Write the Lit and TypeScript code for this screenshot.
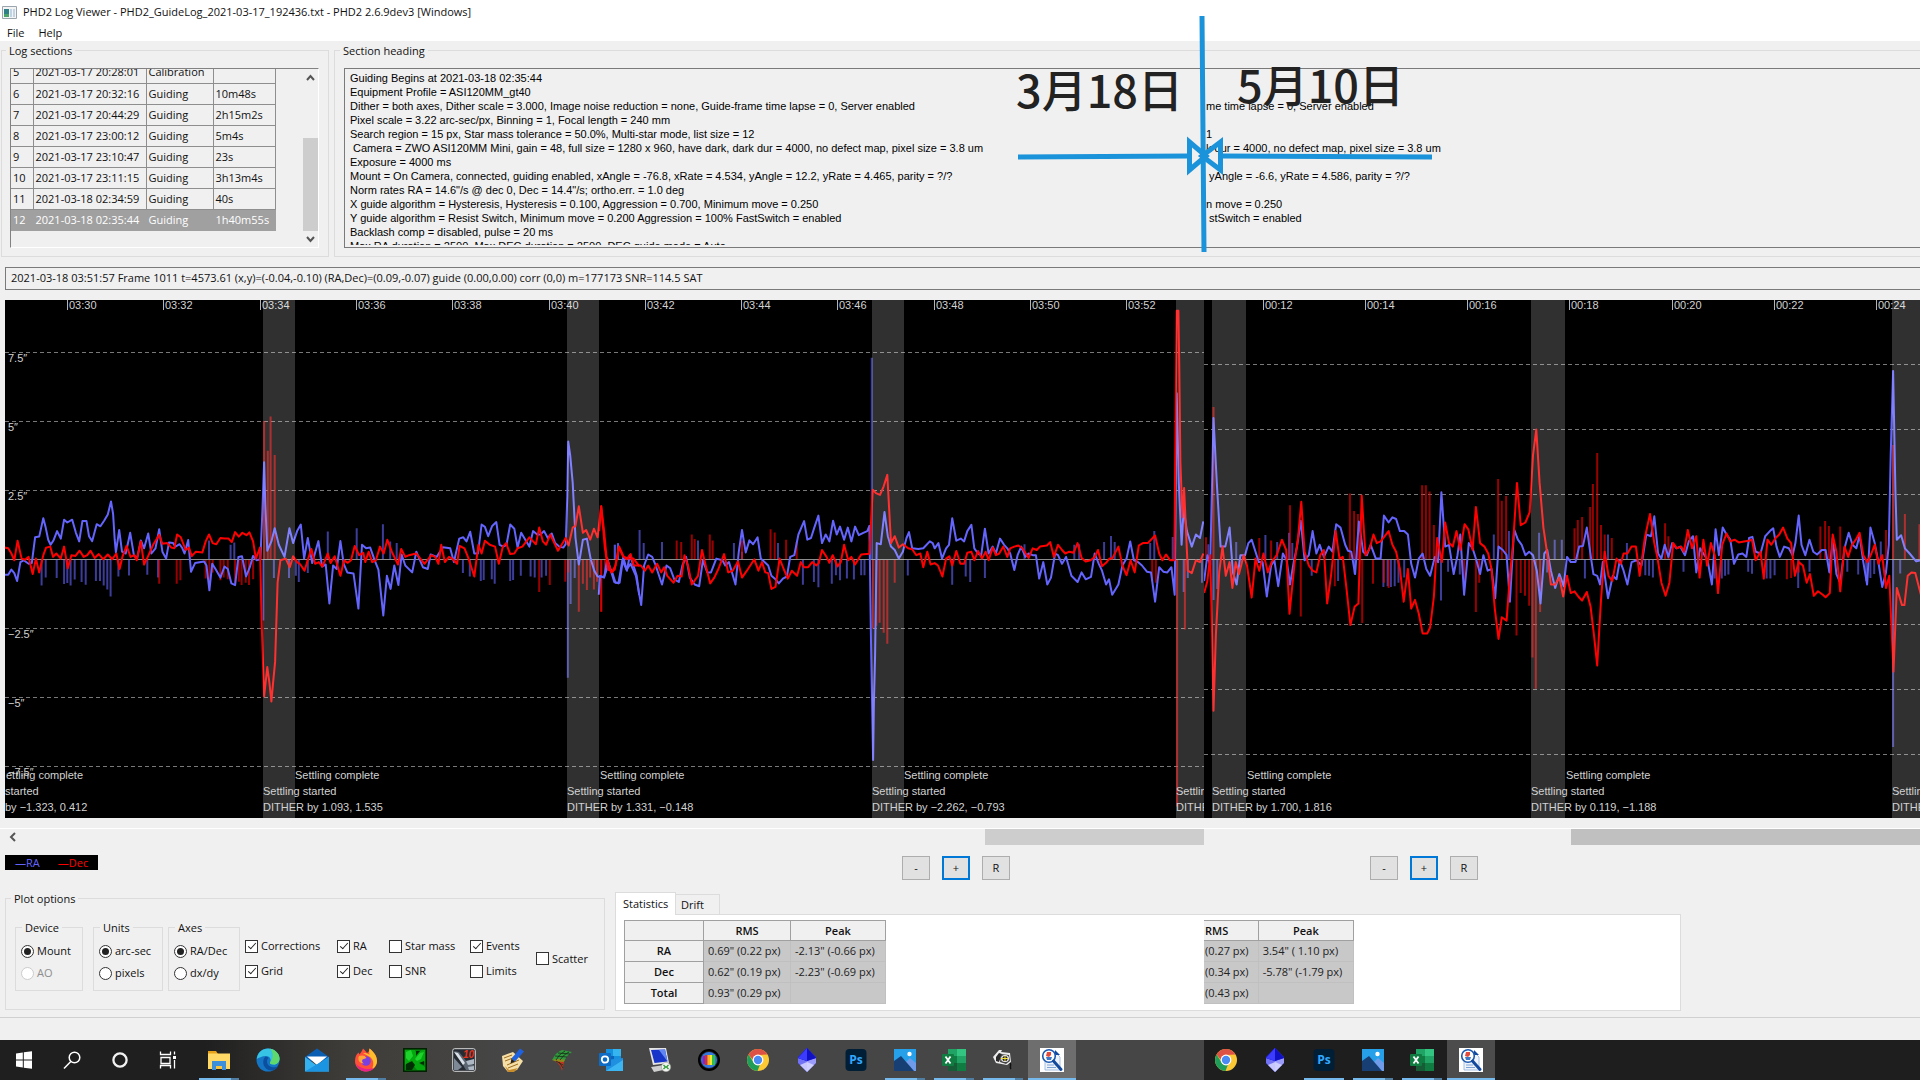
import { LitElement, html, svg, css, type TemplateResult } from "lit";
import { customElement, property } from "lit/decorators.js";

/* ---------- log data ---------- */

const sections: [number, string, string, string][] = [
  [5, "2021-03-17 20:28:01", "Calibration", ""],
  [6, "2021-03-17 20:32:16", "Guiding", "10m48s"],
  [7, "2021-03-17 20:44:29", "Guiding", "2h15m2s"],
  [8, "2021-03-17 23:00:12", "Guiding", "5m4s"],
  [9, "2021-03-17 23:10:47", "Guiding", "23s"],
  [10, "2021-03-17 23:11:15", "Guiding", "3h13m4s"],
  [11, "2021-03-18 02:34:59", "Guiding", "40s"],
  [12, "2021-03-18 02:35:44", "Guiding", "1h40m55s"],
];

const heading = `Guiding Begins at 2021-03-18 02:35:44
Equipment Profile = ASI120MM_gt40
Dither = both axes, Dither scale = 3.000, Image noise reduction = none, Guide-frame time lapse = 0, Server enabled
Pixel scale = 3.22 arc-sec/px, Binning = 1, Focal length = 240 mm
Search region = 15 px, Star mass tolerance = 50.0%, Multi-star mode, list size = 12
 Camera = ZWO ASI120MM Mini, gain = 48, full size = 1280 x 960, have dark, dark dur = 4000, no defect map, pixel size = 3.8 um
Exposure = 4000 ms
Mount = On Camera, connected, guiding enabled, xAngle = -76.8, xRate = 4.534, yAngle = 12.2, yRate = 4.465, parity = ?/?
Norm rates RA = 14.6"/s @ dec 0, Dec = 14.4"/s; ortho.err. = 1.0 deg
X guide algorithm = Hysteresis, Hysteresis = 0.100, Aggression = 0.700, Minimum move = 0.250
Y guide algorithm = Resist Switch, Minimum move = 0.200 Aggression = 100% FastSwitch = enabled
Backlash comp = disabled, pulse = 20 ms
Max RA duration = 2500, Max DEC duration = 2500, DEC guide mode = Auto`;

const headingRight = `

me time lapse = 0, Server enabled

1
k dur = 4000, no defect map, pixel size = 3.8 um

 yAngle = -6.6, yRate = 4.586, parity = ?/?

n move = 0.250
 stSwitch = enabled`;

/* ---------- traces ---------- */

/** A recorded stretch of guiding: samples are x,y pairs in recorder units. */
interface Trace {
  origin: number;
  scale: number;
  ra: string;
  dec: string;
  raPulse: string;
  decPulse: string;
}

interface Plot {
  ticks: [number, string][];
  grid: [number, string][];
  bands: [number, number][];
  notes: [number, number, string][];
  traces: Trace[];
}

const Y_SCALE = 2.9037;
const toY = (v: number) => v / Y_SCALE - 10;
const pairs = (s: string) => s.trim().split(/\s+/).map((p) => p.split(",").map(Number));

const marchA: Trace = {
  origin: -5,
  scale: 2.45,
  ra: `12,827 20,827 28,812 35,822 42,845 50,790 58,785 70,795 78,793 86,718 96,716 101,690 106,663 112,690 118,725 124,740 131,727 140,700 149,722 157,667 165,675 177,667 186,705 194,730 202,671 212,671 218,715 226,729 237,680 246,686 255,670 264,652 272,614 277,650 281,725 284,762 292,697 299,760 308,765 319,705 328,770 336,780 345,727 353,750 363,707 371,765 381,750 390,695 398,760 407,780 414,733 424,735 430,745 440,738 447,750 452,765 461,726 468,818 478,793 500,788 506,800 513,872 520,795 528,810 540,835 550,803 558,810 567,852 576,857 584,775 593,773 603,832 612,805 620,772 629,785 638,782 643,640 647,500 650,620 655,757 665,730 673,692 683,740 697,775 709,692 718,735 728,700 737,681 745,780 754,720 765,793 780,729 789,803 798,797 807,910 816,800 825,810 834,729 842,795 851,820 866,823 878,925 887,740 897,750 907,748 918,785 927,812 939,945 948,830 957,868 966,800 976,857 984,768 993,800 1010,820 1020,760 1036,805 1048,810 1055,768 1070,775 1085,747 1103,750 1112,790 1125,722 1135,718 1143,730 1152,702 1162,765 1171,765 1180,681 1188,688 1196,715 1206,685 1216,674 1224,740 1233,745 1241,740 1250,681 1260,693 1268,748 1277,705 1287,725 1297,745 1306,700 1316,710 1324,710 1333,700 1342,720 1352,707 1360,735 1370,745 1380,748 1386,738 1390,600 1392,440 1397,480 1403,560 1410,720 1418,797 1428,725 1438,722 1447,780 1456,815 1464,832 1480,833 1490,800 1500,820 1508,850 1518,850 1527,775 1536,815 1543,770 1552,800 1560,830 1566,885`,
  dec: `12,748 20,750 28,765 35,785 43,728 53,780 61,783 70,775 80,825 88,780 96,820 106,770 113,748 123,745 130,775 138,765 149,780 157,745 166,808 175,770 185,772 195,757 205,775 214,770 222,757 232,778 242,767 253,782 264,768 275,782 285,765 293,810 300,775 310,743 320,775 329,770 335,785 345,730 353,797 362,775 375,740 390,711 398,737 410,735 420,748 427,750 434,710 443,718 455,755 463,748 470,773 480,760 496,762 504,730 512,710 521,735 530,738 540,720 550,722 560,722 568,732 576,703 585,716 594,705 604,712 611,704 620,730 627,780 637,748 641,960 647,1180 655,1095 660,1140 665,1195 669,1140 674,1080 680,850 687,785 700,780 710,805 718,773 728,790 736,797 746,815 755,780 763,752 772,795 781,790 790,803 803,765 810,793 820,773 834,830 843,785 852,792 860,785 869,743 880,770 890,763 895,790 903,760 912,790 921,785 931,745 940,765 949,725 960,760 975,797 983,752 993,775 1002,770 1020,765 1040,795 1057,770 1066,775 1074,795 1081,740 1090,790 1100,775 1108,780 1120,795 1126,743 1138,750 1148,780 1162,832 1172,740 1180,765 1188,728 1200,740 1213,745 1222,795 1232,745 1240,735 1250,767 1260,765 1268,750 1280,745 1297,718 1306,730 1313,738 1321,690 1330,730 1338,740 1348,710 1358,735 1367,757 1376,740 1386,720 1393,742 1403,690 1410,685 1418,628 1428,705 1436,697 1446,725 1455,693 1464,718 1473,628 1482,750 1490,812 1500,818 1508,800 1517,745 1528,775 1540,780 1552,780 1566,802`,
  raPulse: `102,858 112,835 139,836 157,854 165,851 173,858 183,841 200,848 210,856 235,845 245,845 254,858 263,870 271,890 290,832 316,829 361,827 387,835 512,727 565,740 574,733 645,960 671,836 708,836 725,830 732,848 754,822 803,701 874,692 938,680 956,730 972,735 1134,822 1151,832 1178,845 1185,842 1205,840 1212,853 1250,845 1257,842 1276,830 1300,832 1310,835 1327,835 1338,830 1391,1126 1398,912 1408,836 1507,740 1514,735`,
  decPulse: `390,853 433,853 442,843 504,838 513,850 521,820 540,843 548,835 558,840 576,852 585,847 592,857 602,850 610,857 620,840 647,380 656,467 663,367 673,479 1321,877 1347,857 1385,847 1392,820 1418,934 1428,853 1438,871 1446,835 1455,870 1463,847 1473,934 1482,820`,
};

const marchB: Trace = {
  origin: 595,
  scale: 2.45,
  ra: `-3,885 0,830 10,835 18,780 28,820 35,848 45,852 55,785 65,812 75,795 88,830 101,915 108,800 118,768 128,775 135,795 152,855 163,800 172,808 182,840 193,848 202,800 211,775 220,835 232,855 243,860 252,785 263,820 272,820 285,780 300,785 307,800 316,790 332,855 340,760 348,697 357,762 366,727 375,738 386,718 394,780 403,790 412,800 420,830 430,840 438,852 448,838 458,832 466,775 476,770 486,710 500,671 508,725 517,720 525,690 535,655 544,735 553,710 562,730 571,670 580,710 588,687 598,725 607,690 616,730 625,687 634,712 645,705 655,700 660,685 664,1020 669,1365 671,1200 674,1060 678,735 688,738 697,645 705,715 713,745 722,755 732,780 742,760 751,720 757,703 765,750 780,752 792,750 808,730 815,735 820,750 829,735 838,780 848,750 855,740 863,663 873,728 884,722 892,730 900,700 910,682 917,750 926,765 934,770 943,693 952,765 962,745 970,765 980,722 990,740 998,750 1005,765 1015,813 1023,770 1032,745 1042,775 1050,765 1060,770 1068,770 1076,838 1086,790 1096,855 1105,835 1115,765 1122,770 1132,795 1142,775 1155,830 1170,848 1180,820 1190,840 1203,833 1212,765 1222,795 1230,815 1240,855 1247,840 1255,885 1270,855 1280,800 1290,780 1299,730 1308,785 1318,790 1328,800 1340,818 1350,820 1360,905 1370,805 1380,818 1390,820 1400,805 1408,885 1413,300 1418,560 1425,740 1430,635 1438,700 1450,745 1460,710 1470,720 1478,672`,
  dec: `-2,700 3,628 10,700 16,775 28,820 36,812 46,747 55,770 65,782 75,767 83,800 100,800 110,815 118,800 128,820 140,795 150,820 157,805 165,830 180,850 190,830 200,832 207,770 216,803 225,855 240,830 250,755 260,805 270,852 280,835 290,810 304,767 314,820 325,815 338,788 348,835 360,815 378,782 388,815 397,790 405,820 412,822 420,868 430,862 440,780 450,810 460,838 470,815 483,830 492,790 500,805 510,805 520,790 530,800 536,793 544,755 555,775 562,792 570,770 582,803 590,790 598,740 608,785 616,775 625,797 640,768 660,766 668,580 676,590 686,595 695,570 704,537 713,735 722,715 732,748 742,738 755,750 765,753 775,770 785,765 792,805 802,760 810,797 820,793 828,800 839,832 848,780 856,773 863,800 873,758 883,795 892,795 900,763 910,760 917,785 926,758 936,780 945,760 952,785 962,748 970,770 978,765 988,745 998,775 1005,750 1015,745 1025,742 1035,750 1050,778 1060,750 1070,755 1078,745 1095,742 1103,732 1112,775 1122,740 1132,755 1140,765 1150,760 1160,763 1170,735 1180,778 1190,788 1202,785 1212,775 1220,755 1230,802 1240,792 1248,780 1255,780 1270,745 1280,800 1290,828 1300,785 1310,820 1320,742 1330,735 1342,735 1360,713 1370,765 1378,785 1387,768 1397,785 1407,785 1409,540 1413,60 1417,60 1419,210 1422,500 1427,660 1431,575 1440,815 1450,822 1460,785 1470,790 1478,765`,
  raPulse: `36,740 44,736 97,697 107,735 152,732 240,727 328,735 348,760 436,735 497,856 524,848 535,863 568,853 578,828 588,843 605,838 622,841 640,828 648,828 666,197 754,829 863,856 896,832 907,848 943,836 1040,738 1162,740 1174,738 1235,732 1252,714 1261,732 1348,735 1358,700 1403,717 1430,877 1440,836 1475,850`,
  decPulse: `3,934 188,727 199,732 225,710 232,723 269,710 276,727 348,727 418,695 428,704 456,725 482,732 668,983 677,975 685,966 695,995 704,1027 722,850 1353,845 1362,850 1414,1500 1433,986`,
};

const may: Trace = {
  origin: -24,
  scale: 2.119,
  ra: `51,845 58,770 64,800 71,372 78,560 86,745 96,745 105,690 112,820 120,855 128,770 138,770 145,735 152,725 160,760 167,790 175,790 184,890 193,800 200,785 208,860 218,765 226,785 233,855 241,790 248,745 256,670 264,785 273,770 281,700 289,765 296,740 305,775 315,745 323,760 331,680 340,690 350,740 356,757 363,760 371,825 379,672 388,760 396,770 404,740 415,780 425,780 432,655 442,675 450,660 458,665 466,700 475,700 483,710 490,795 498,835 506,780 514,765 522,810 530,830 540,775 547,790 554,587 562,745 570,740 580,825 588,770 594,710 602,885 612,735 620,750 628,785 636,825 643,770 652,815 660,810 668,895 675,745 684,755 692,770 699,905 708,695 716,725 724,740 732,770 740,760 748,770 756,815 764,910 772,765 778,755 786,815 795,865 804,825 813,860 820,775 828,790 838,790 846,745 854,743 862,690 870,770 876,825 884,830 890,855 896,790 907,895 917,830 925,840 932,785 940,815 948,855 957,790 968,785 978,800 988,710 998,715 1005,657 1013,765 1020,780 1027,740 1035,775 1043,735 1052,750 1060,745 1070,770 1078,730 1087,715 1094,820 1102,750 1109,765 1118,785 1127,855 1135,695 1142,770 1150,690 1158,710 1166,725 1174,795 1183,768 1192,765 1200,775 1206,720 1213,717 1220,760 1230,765 1240,715 1250,700 1257,692 1264,745 1271,775 1280,745 1290,750 1298,770 1304,735 1311,655 1317,740 1325,770 1334,725 1342,760 1350,768 1360,755 1368,755 1376,820 1383,720 1391,825 1399,850 1408,750 1417,705 1425,740 1433,750 1440,712 1448,790 1456,855 1463,690 1472,735 1480,790 1488,862 1496,820 1502,740 1506,480 1511,235 1516,580 1519,725 1528,712 1536,750 1546,765 1560,788 1570,785`,
  dec: `51,880 58,845 64,770 68,1000 71,1222 76,1000 83,820 90,745 97,830 105,790 111,865 118,790 125,825 135,770 142,800 152,893 160,780 168,815 177,765 186,820 194,790 205,770 216,725 225,755 232,940 243,790 250,720 257,615 264,760 273,800 281,815 289,820 297,770 305,755 312,910 320,830 330,700 338,780 345,775 353,870 361,973 370,920 378,910 385,597 393,770 402,750 410,710 417,735 425,730 434,715 442,700 450,740 458,760 466,810 474,905 483,810 490,925 498,900 506,940 514,997 524,997 530,980 538,890 545,720 555,790 562,675 570,735 578,745 586,700 594,755 603,680 611,695 620,755 627,630 636,735 645,745 653,765 660,810 667,925 675,1013 682,950 692,960 699,830 706,730 714,560 722,683 732,675 741,645 748,480 755,405 762,560 770,690 778,765 786,855 795,855 804,835 812,890 820,830 828,880 836,875 844,890 852,902 862,877 870,920 877,1000 884,1090 892,900 900,760 908,830 916,845 925,780 934,795 940,765 948,765 957,745 966,745 974,830 985,720 996,650 1005,735 1012,780 1020,850 1029,888 1037,850 1045,735 1053,750 1062,745 1068,760 1076,697 1085,750 1094,715 1101,835 1109,725 1117,800 1125,735 1133,770 1140,880 1149,740 1158,707 1166,730 1175,725 1184,733 1195,730 1205,728 1212,725 1220,785 1230,760 1237,838 1245,725 1253,740 1262,720 1270,710 1278,690 1287,722 1295,735 1303,830 1311,790 1320,800 1328,850 1335,825 1343,888 1352,875 1362,885 1368,892 1377,880 1383,710 1391,760 1399,875 1408,745 1416,775 1424,740 1432,725 1440,705 1448,770 1457,790 1465,765 1472,740 1480,795 1488,770 1496,865 1503,830 1507,960 1512,1108 1519,865 1530,915 1535,915 1542,830 1550,820 1558,822 1570,885`,
  raPulse: `60,738 71,900 79,868 119,732 181,711 206,732 231,705 238,735 279,830 335,845 370,825 431,862 440,860 447,862 455,860 463,850 475,835 553,902 568,818 593,826 665,710 697,700 761,705 778,820 794,725 809,725 858,838 907,710 947,735 986,828 994,830 1002,835 1067,818 1133,838 1148,838 1155,830 1162,826 1204,818 1212,824 1243,838 1251,838 1260,828 1310,865 1334,818 1376,818 1414,818 1437,826 1454,845 1463,836 1471,825 1485,730 1511,1327 1526,823`,
  decPulse: `55,718 71,340 168,720 193,727 233,625 256,948 328,860 360,591 369,642 377,650 386,967 409,853 432,850 442,865 513,567 521,567 529,585 538,682 602,865 627,935 634,850 674,549 682,612 691,598 713,1003 722,880 731,888 740,917 747,1067 754,1158 763,935 836,692 843,668 852,659 869,630 875,563 884,473 892,682 900,710 915,720 1028,677 1035,715 1286,840 1295,836 1311,820 1357,687 1367,671 1375,685 1399,687 1496,697 1511,450 1536,650 1567,680`,
};

const marchPlot: Plot = {
  ticks: ["03:30", "03:32", "03:34", "03:36", "03:38", "03:40", "03:42", "03:44", "03:46", "03:48", "03:50", "03:52"].map(
    (t, i) => [Math.round(62 + i * 96.3), t] as [number, string],
  ),
  grid: [[52, "7.5″"], [121, "5″"], [190, "2.5″"], [328, "−2.5″"], [397, "−5″"], [466, "−7.5″"]],
  bands: [[258, 32], [562, 32], [867, 32], [1171, 40]],
  notes: [
    [1, 479, "ettling complete"], [0, 495, "started"], [0, 511, "by −1.323, 0.412"],
    [290, 479, "Settling complete"], [258, 495, "Settling started"], [258, 511, "DITHER by 1.093, 1.535"],
    [595, 479, "Settling complete"], [562, 495, "Settling started"], [562, 511, "DITHER by 1.331, −0.148"],
    [899, 479, "Settling complete"], [867, 495, "Settling started"], [867, 511, "DITHER by −2.262, −0.793"],
    [1171, 495, "Settlin"], [1171, 511, "DITHE"],
  ],
  traces: [marchA, marchB],
};

const mayPlot: Plot = {
  ticks: [[59, "00:12"], [161, "00:14"], [263, "00:16"], [365, "00:18"], [468, "00:20"], [570, "00:22"], [672, "00:24"]],
  grid: [[64, ""], [129, ""], [194, ""], [324, ""], [389, ""], [454, ""]],
  bands: [[8, 34], [327, 34], [688, 40]],
  notes: [
    [43, 479, "Settling complete"], [8, 495, "Settling started"], [8, 511, "DITHER by 1.700, 1.816"],
    [362, 479, "Settling complete"], [327, 495, "Settling started"], [327, 511, "DITHER by 0.119, −1.188"],
    [688, 495, "Settlin"], [688, 511, "DITHE"],
  ],
  traces: [may],
};

@customElement("guide-plot")
export class GuidePlot extends LitElement {
  @property({ attribute: false }) plot!: Plot;
  @property() name = "";

  static styles = css`
    :host { display: block; min-width: 0; background: #000; }
    .canvas { display: block; width: 100%; height: 518px; }
    .grid { stroke: #787878; stroke-dasharray: 4 3; shape-rendering: crispEdges; }
    .axis { stroke: #8c8c8c; shape-rendering: crispEdges; }
    .tick { stroke: #b4b4b4; shape-rendering: crispEdges; }
    .text { fill: #d2d2d2; font: 11px "Liberation Sans", Arial, sans-serif; }
    .line { fill: none; stroke-width: 2; stroke-linejoin: round; }
    .ra { stroke: #6464ff; }
    .dec { stroke: #f00; }
    .pulse { fill: none; stroke-width: 2; opacity: 0.6; }
    .band { fill: #fff; opacity: 0.19; }
  `;

  private line(t: Trace, s: string) {
    return pairs(s).map(([x, y]) => `${(t.origin + x / t.scale).toFixed(1)},${toY(y).toFixed(1)}`).join(" ");
  }

  private pulses(t: Trace, s: string) {
    return pairs(s).map(([x, y]) => `M${(t.origin + x / t.scale).toFixed(1)} 259V${toY(y).toFixed(1)}`).join("");
  }

  render() {
    const p = this.plot;
    return html`<svg class="canvas" role="img" aria-label=${this.name}>
      ${p.grid.map(([y, label]) => svg`
        <line class="grid" x1="0" x2="100%" y1=${y + 0.5} y2=${y + 0.5}></line>
        <text class="text" x="3" y=${y + 10}>${label}</text>`)}
      ${p.ticks.map(([x, label]) => svg`
        <line class="tick" x1=${x + 0.5} x2=${x + 0.5} y1="0" y2="10"></line>
        <text class="text" x=${x + 2} y="9">${label}</text>`)}
      ${p.traces.map((t) => svg`
        <path class="pulse ra" d=${this.pulses(t, t.raPulse)}></path>
        <path class="pulse dec" d=${this.pulses(t, t.decPulse)}></path>`)}
      <line class="axis" x1="0" x2="100%" y1="259.5" y2="259.5"></line>
      ${p.traces.map((t) => svg`<polyline class="line ra" points=${this.line(t, t.ra)}></polyline>`)}
      ${p.traces.map((t) => svg`<polyline class="line dec" points=${this.line(t, t.dec)}></polyline>`)}
      ${p.bands.map(([x, w]) => svg`<rect class="band" x=${x} y="0" width=${w} height="100%"></rect>`)}
      ${p.notes.map(([x, y, label]) => svg`<text class="text" x=${x} y=${y}>${label}</text>`)}
    </svg>`;
  }
}

/* ---------- task bar ---------- */

const icons: Record<string, TemplateResult> = {
  Start: svg`<path fill="#fff" d="M4 5.5l6.800-1v7H4zM11.800 4.300L20 3.200v8.300h-8.200zM4 12.500h6.800v7L4 18.500zM11.800 12.500H20v8.300l-8.200-1.100z"/>`,
  Search: svg`<g fill="none" stroke="#fff" stroke-width="1.5"><circle cx="14.5" cy="9.5" r="5.3"/><path d="M10.8 13.5L4 20.5"/></g>`,
  Cortana: svg`<circle cx="12" cy="12" r="6.6" fill="none" stroke="#f2f2f2" stroke-width="2.3"/>`,
  "Task View": svg`<g fill="none" stroke="#fff" stroke-width="1.3"><path d="M4.5 3.5v3h10v-3M5 9.5h9v6H5zM4.5 20.5v-3h10v3M18.5 3.500v3M18.500 12v8.500"/></g><path fill="#fff" d="M17 8h3v3h-3z"/>`,
  "File Explorer": svg`<path fill="#e8a21a" d="M1 3h8l2 3h-10z"/><path fill="#ffd866" d="M1 5.500h22V21H1z"/><path fill="#3c8fd8" d="M5 13h14v9h-4v-4H9v4H5z"/><path fill="#fbc43b" d="M9 18h6v3H9z"/>`,
  Edge: svg`<circle cx="12" cy="12" r="11.500" fill="#1475c4"/><path fill="#36c3e4" d="M.8 11C1.500 4.500 6.500.5 12 .5c6.500 0 11.500 5 11.500 10 0 4-3 6-6 6-2.500 0-4-1-3.500-2 1.500-2 .5-6.500-4-6.500C6 8 2.500 10 .8 11z"/><path fill="#5fd96c" d="M14 .8c6 1 9.500 5.500 9.500 9.700 0 4-3 6-6 6-2.500 0-4-1-3.500-2C17.500 10 18 5 14 .8z"/><path fill="#0c4f9e" d="M9 9c-4 5-1 13 6 13.500 3 0 6-2 7-4-5 2-11 0-11-5 0-1.500.5-3 1.500-3.500C11.500 9 10 8.500 9 9z"/>`,
  Mail: svg`<path fill="#0b5fb3" d="M0 9L12 .5 24 9v4H0z"/><path fill="#fff" d="M2 8.500h20L12 17z"/><path fill="#34b1ef" d="M0 9l12 8.500L24 9v14.500H0z"/><path fill="#1b94e2" d="M0 23.500L24 9v14.500z"/>`,
  Firefox: svg`<path fill="#ff4f3a" d="M1 13C1 9 2.500 6 4.500 4.500l1 2C7 4.500 8 3 9 .5c2 2 3 3 4 4.500C16 3 15 2 15.500.5 19 4 23 7 23 13c0 6-5 10.500-11 10.500S1 19 1 13z"/><path fill="#ffbd2e" d="M9 5c3 0 5 .5 6.500 2-.5-3-.5-5 0-6.500C20 4 23 8 23 13c0 3-2 7-5 8 2-4 2-9-2-12z"/><path fill="#e6228b" d="M2 16c2 5 6 7.500 10 7.500 3 0 6-1 8-3.500-6 2-13 1-18-4z"/><circle cx="12" cy="13" r="4.800" fill="#7a3fe0"/><path fill="#ffa436" d="M5 8c3-1 6-1 7.500 2l-4 1.500c-1 2 0 3 1.500 4-4 0-7-3-5-7.500z"/>`,
  Terrain: svg`<path fill="#020" d="M0 0h24v24H0z"/><path fill="#06800d" d="M1.500 1.500h21v21h-21z"/><path fill="#04a80e" d="M2 2h10l1 3 6-3h3v11l-5 3 5 3v3h-8l-4-5-4 3-4-4z"/><path fill="#1ed42c" d="M3 4l5-2 2 6-4 5-3-3zM12 11l5-6 4-1-3 7-4 2z"/><path fill="#012d04" d="M3 16l6-3 3 4-3 5H3zM13 3h4l-4 5zM16 15l5-2v4z"/>`,
  Planetarium: svg`<rect x=".7" y=".7" width="22.600" height="22.600" rx="2" fill="#262b33" stroke="#d8d8d8"/><path fill="#5c6673" d="M2 3l5 1 8 10 7 3v5h-8L8 12z"/><path fill="#7e8997" d="M2 10l8 9-4 3H2z"/><path fill="#d9dfe6" d="M2 4l4 1 7 10-2 2z"/><path fill="#aeb8c4" d="M14 13l8-2v5l-6 1zM16 19l6-1v4h-5z"/><text x="11" y="9.500" font-family="Liberation Sans, sans-serif" font-size="10" font-style="italic" font-weight="700" fill="#e8341c">10</text>`,
  Notes: svg`<path fill="#f6dfa6" d="M1 8l11-4 10 9-6 9-9 2-5-6z"/><path stroke="#9b6b1f" fill="none" d="M3 10l8-3M4 13l8-3M6 17l12-5M7 20l10-4"/><path fill="#c98c2b" d="M4 18l4 4 9-2-4 4H7z"/><path fill="#1f62e0" d="M10.500 10.500L19 .5l4 3-9 10z"/><path fill="#222" d="M10.500 10.500l3.500 3-4.500 2z"/>`,
  Mesh: svg`<path fill="#2f9a3c" d="M2 12Q6 4 12 2l10 2q-5 3-7 8z"/><path fill="#8b8b1c" d="M2 12q6-2 13 0l-3 5q-5-4-10-5z"/><path fill="#c2341e" d="M5 13q6 1 9 1l-2 9q-1-6-7-10z"/><path stroke="#1b2a1b" stroke-width=".8" fill="none" d="M5 8l12 1M8 5l12 1M6 12q3-6 9-9M10 12q4-6 9-8M6 13l7 4M9 14l4 6"/>`,
  Outlook: svg`<path fill="#1490df" d="M7 1h15v13H7z"/><path fill="#36b4f0" d="M14 1h8v7h-8z"/><path fill="#0b64b8" d="M7 8h8v6H7z"/><path fill="#1f8fe0" d="M7 12l17-2v13H7z"/><path fill="#3cb6f2" d="M7 23l17-11v11z"/><rect y="5" width="12" height="13" rx="1" fill="#0f6cc4"/><circle cx="6" cy="11.500" r="3.200" fill="none" stroke="#fff" stroke-width="1.800"/>`,
  "Remote Desktop": svg`<path fill="#e4e4e4" d="M1 0h17l3 15-16 2z"/><path fill="#1735c8" d="M3 2l14-.5 2.500 12-13 1.500z"/><path fill="#5f86f2" d="M11 2l6-.5 2.500 12z"/><path fill="#cfcfcf" d="M3 19l13-2 4 4-14 3z"/><circle cx="18" cy="19" r="4.700" fill="#f1f3ef" stroke="#999" stroke-width=".6"/><path d="M15.500 17l2 2-2 2M20.500 17l-2 2 2 2" stroke="#2c9a34" stroke-width="1.300" fill="none"/>`,
  Spectrum: svg`<circle cx="12" cy="12" r="10" fill="#222" stroke="#000" stroke-width="2"/><circle cx="12" cy="12" r="8" fill="#3477e0"/><path fill="#7c2bd0" d="M5.500 8h3v8h-3z"/><path fill="#e12a2a" d="M8 7h2.500v10H8z"/><path fill="#ffb01e" d="M10.500 7H13v10h-2.500z"/><path fill="#f3e832" d="M13 7h2v10h-2z"/><path fill="#2fbf46" d="M15 7h3v10h-3z"/>`,
  Chrome: svg`<circle cx="12" cy="12" r="11" fill="#fcc934"/><path fill="#de5246" d="M2.500 6.500A11 11 0 0 1 21.500 6.500L12 7a5 5 0 0 0-5 5z"/><path fill="#1e9e58" d="M2.500 6.500l5.200 8A5 5 0 0 0 14 16.500L11.500 23A11 11 0 0 1 2.500 6.500z"/><circle cx="12" cy="12" r="5.400" fill="#fff"/><circle cx="12" cy="12" r="4.200" fill="#4a8af4"/>`,
  Crystal: svg`<path fill="#2424e6" d="M12 0l9 9v6l-9 9-9-9V9z"/><path fill="#7272f4" d="M3 10l9 3v11l-9-9z"/><path fill="#b9b9ff" d="M12 13l9-3v5l-9 9z" opacity=".8"/><path fill="#dcdcff" d="M5 17l7-3 7 3-7 7z" opacity=".8"/><path fill="#1111c4" d="M12 0l9 10-9 3-9-3z"/><path fill="#3c3cff" d="M12 0v13L3 10z"/>`,
  Photoshop: svg`<rect x="1.500" y="1" width="21" height="22" rx="4" fill="#001e36"/><text x="12" y="16" text-anchor="middle" font-family="Open Sans, sans-serif" font-size="12" font-weight="700" fill="#31a8ff">Ps</text>`,
  Photos: svg`<path fill="#27a0ea" d="M1 1h22v22H1z"/><path fill="#6f9be8" d="M12 15l5-5 6 5v8H12z"/><path fill="#173f74" d="M1 13l7-5 13 15H1z"/><circle cx="16.500" cy="6" r="2.200" fill="#fff"/>`,
  Excel: svg`<path fill="#21a366" d="M6 1h18v22H6z"/><path fill="#33c481" d="M15 1h9v7h-9z"/><path fill="#107c41" d="M6 8h9v7H6zM15 15h9v8h-9z"/><path fill="#185c37" d="M6 15h9v8H6z"/><rect y="6" width="12" height="12" rx="1" fill="#107c41"/><path d="M3.500 8.500l5 7M8.500 8.500l-5 7" stroke="#fff" stroke-width="1.800"/>`,
  Camera: svg`<path fill="#ececec" d="M2 9l6-7 3 0-1 2 9 1 1 9-4 3-11-2z"/><path fill="#2a2a2a" d="M5 9l3-4 3 1-3 8-3-1z"/><path fill="#444" d="M10 6l8 1 1 6-4 3-6-2z"/><ellipse cx="14" cy="10.500" rx="4" ry="3.500" fill="#e9e9e9"/><circle cx="14" cy="10.500" r="2.600" fill="#222"/><path stroke="#f2df3a" d="M10 10.500h7M14 8v5"/><path d="M19 15c2 2-1 4 1 6" stroke="#111" stroke-width="1.500" fill="none"/>`,
  "PHD2 Log Viewer": svg`<path fill="#fff" d="M0 0h24v24H0z"/><path fill="#eef3fa" stroke="#8fb0dc" stroke-width=".8" d="M5 4h10l5 5v13H5z"/><path fill="#12499c" d="M15 2l5 5h-5z"/><path stroke="#7ea4d6" d="M7 17h7M7 19.500h9" /><circle cx="9" cy="8" r="6.300" fill="#fff" stroke="#1a57ae" stroke-width="1.600"/><path fill="#e24b3c" d="M7 4h4v3l-2 2-3-1z"/><path fill="#3e79c8" d="M6 9h6l-1 3H7z"/><path d="M13.500 13L21 21.500" stroke="#12499c" stroke-width="3" stroke-linecap="round"/>`,
};

type App = [string, "" | "open" | "many" | "active"];

const system: App[] = [["Start", ""], ["Search", ""], ["Cortana", ""], ["Task View", ""]];
const apps: App[] = [
  ["File Explorer", "many"], ["Edge", ""], ["Mail", ""], ["Firefox", "many"], ["Terrain", ""], ["Planetarium", ""],
  ["Notes", ""], ["Mesh", ""], ["Outlook", ""], ["Remote Desktop", ""], ["Spectrum", ""], ["Chrome", ""],
  ["Crystal", ""], ["Photoshop", ""], ["Photos", "many"], ["Excel", "many"], ["Camera", "many"], ["PHD2 Log Viewer", "active"],
];
const appsRight: App[] = [
  ["Chrome", ""], ["Crystal", ""], ["Photoshop", "open"], ["Photos", "many"], ["Excel", "many"], ["PHD2 Log Viewer", "active"],
];

@customElement("task-bar")
export class TaskBar extends LitElement {
  static styles = css`
    :host { display: grid; grid-template-columns: 1204fr 716fr; height: 40px; }
    .half { display: flex; min-width: 0; overflow: hidden; }
    .left { background: linear-gradient(90deg, #1f1f1f 0, #1f1f1f 17%, #3f3d39 29%, #464646 42%, #464646 100%); }
    .right { background: #1e1e1e; }
    .group { display: flex; gap: 1px; }
    .system { gap: 0; margin-right: 3px; }
    .right .group { margin-left: -2px; }
    .app { flex: none; display: flex; flex-direction: column; align-items: center; justify-content: space-between;
      width: 48px; height: 40px; padding: 8px 0 0; border: 0; background: none; }
    .icon { width: 24px; height: 24px; }
    .mark { width: 40px; height: 2px; }
    .open .mark, .active .mark { background: #76b9ed; }
    .many .mark { background: linear-gradient(90deg, #76b9ed 32px, #507ea2 32px); }
    .active { background: #6e6e6e; }
    .right .active { background: #4c4c4c; }
    .active .mark { width: 48px; }
  `;

  private group(list: App[], extra = "") {
    return html`<div class="group ${extra}">
      ${list.map(([name, state]) => html`<button class="app ${state}" aria-label=${name}>
        <svg class="icon" viewBox="0 0 24 24" aria-hidden="true">${icons[name]}</svg><span class="mark"></span>
      </button>`)}
    </div>`;
  }

  render() {
    return html`
      <div class="half left">${this.group(system, "system")}${this.group(apps)}</div>
      <div class="half right">${this.group(appsRight)}</div>`;
  }
}

/* ---------- window ---------- */

@customElement("app-root")
export class AppRoot extends LitElement {
  static styles = css`
    :host { display: block; font: 11px/16px "Open Sans", "Noto Sans", sans-serif; color: #111; }
    * { box-sizing: border-box; }
    .window { position: relative; display: flex; flex-direction: column; min-height: 100vh; background: #f0f0f0; overflow: hidden; }
    button, input, textarea { font: inherit; color: inherit; }

    .title { display: flex; align-items: center; gap: 6px; height: 24px; padding-left: 2px; background: #fff; }
    .logo { width: 15px; height: 13px; }
    .menu { display: flex; gap: 14px; height: 17px; padding-left: 7px; background: #fff; }
    .item { padding: 0; border: 0; background: none; line-height: 17px; }

    .group { min-width: 0; margin: 0; border: 1px solid #dcdcdc; padding: 0; }
    .legend { height: 16px; padding: 0 3px; line-height: 18px; }

    .top { display: flex; gap: 5px; padding: 1px 0 0 1px; }
    .logs { flex: none; width: 328px; height: 215px; padding: 10px 9px 8px 8px; }
    .logs > .legend, .info > .legend, .plotopts > .legend { margin-left: -4px; }
    .list { display: flex; height: 180px; border: 1px solid #828282; border-right-color: #fff; border-bottom-color: #fff; overflow: hidden; }
    .rows { flex: 1; }
    .sections { width: 264px; margin-top: -7px; border-collapse: collapse; table-layout: fixed; }
    .sections td { height: 21px; padding: 0 0 0 2px; border-right: 1px solid #8e8e8e; border-bottom: 1px solid #8e8e8e; line-height: 18px; white-space: nowrap; }
    .c1 { width: 22px; } .c2 { width: 113px; } .c3 { width: 67px; } .c4 { width: 62px; }
    .sections .chosen td { background: #a0a0a0; color: #fff; border-color: #a0a0a0; }
    .vbar { display: flex; flex-direction: column; width: 15px; }
    .arrow { flex: none; display: block; width: 15px; height: 16px; padding: 0; border: 0; background: none; }
    .vtrack { flex: 1; display: flex; flex-direction: column; justify-content: flex-end; }
    .vthumb { height: 93px; background: #cdcdcd; }
    .chev { display: block; width: 15px; height: 16px; fill: none; stroke: #555; stroke-width: 2; }

    .info { flex: 1; height: 215px; padding: 10px 0 8px 9px; border-right: 0; }
    .infobox { display: grid; grid-template-columns: 859fr 716fr; height: 180px; border: 1px solid #7a7a7a; border-right: 0; }
    .log { display: block; width: 100%; height: 176px; padding: 2px 0 0 5px; border: 0; background: none; resize: none; overflow: hidden;
      font: 11px/14px "Liberation Sans", Arial, sans-serif; color: #000; white-space: pre; }
    .second { padding-left: 2px; }

    .frame { display: block; height: 23px; margin: 10px 0 10px 5px; padding: 0 5px 2px; border: 1px solid #7a7a7a; border-right: 0; background: none; }
    .plots { display: grid; grid-template-columns: 1199fr 716fr; margin-left: 5px; }

    .hbar { display: grid; grid-template-columns: 985fr 219fr 367fr 349fr; height: 16px; margin-top: 10px; border-top: 1px solid #fff; }
    .thumb { background: #cdcdcd; }
    .thumb2 { grid-column: 4; background: #c0c0c0; }
    .back { margin-left: 5px; }

    .tools { display: grid; grid-template-columns: 902fr 468fr 550fr; height: 46px; padding-top: 12px; }
    .key { display: flex; gap: 18px; width: 93px; height: 15px; margin: -1px 0 0 5px; padding-left: 10px; background: #000; line-height: 15px; }
    .kra { color: #6464ff; } .kdec { color: #f00; }
    .zoom { display: flex; gap: 12px; }
    .btn { width: 28px; height: 24px; padding: 0; border: 1px solid #adadad; background: #e1e1e1; line-height: 20px; }
    .focus { border: 2px solid #0078d7; }

    .bottom { display: grid; grid-template-columns: 600px 1066fr 229fr; column-gap: 10px; height: 121px; padding-left: 5px; }
    .plotopts { display: flex; height: 120px; padding: 13px 0 0 9px; }
    .radios { display: flex; flex-direction: column; gap: 8px; height: 72px; padding: 9px 0 0 5px; margin-right: 10px; }
    .dev { width: 68px; } .units { width: 70px; margin-right: 5px; } .axes { width: 72px; margin-right: 5px; }
    .radios .legend { margin-left: 1px; }
    .opt { display: flex; align-items: center; gap: 3px; height: 14px; white-space: nowrap; }
    .disabled { color: #8e8e8e; }
    .box { flex: none; appearance: none; display: grid; place-content: center; width: 13px; height: 13px; margin: 0; border: 1px solid #333; background: #fff; }
    .box:disabled { border-color: #ccc; }
    .radio { border-radius: 50%; }
    .radio:checked::after { content: ""; width: 7px; height: 7px; border-radius: 50%; background: #222; }
    .tick:checked::after { content: ""; width: 7px; height: 3px; margin-top: -2px; border: solid #222; border-width: 0 0 1px 1px; transform: rotate(-48deg); }
    .checks { display: grid; grid-template-columns: 92px 52px 81px 66px auto; grid-template-rows: 14px 14px; row-gap: 11px; align-content: start; padding-top: 20px; }
    .scatter { grid-row: 1 / 3; grid-column: 5; align-self: center; }

    .stats { display: flex; flex-direction: column; }
    .tabs { display: flex; align-items: flex-end; height: 23px; margin-top: 1px; }
    .tab { width: 44px; height: 20px; padding: 0 5px; border: 1px solid #dcdcdc; border-left: 0; border-bottom: 0; background: none; text-align: left; line-height: 18px; }
    .tabs .on { z-index: 1; width: 61px; height: 23px; margin-bottom: -1px; padding: 0 7px; border-left: 1px solid #dcdcdc; background: #fff; }
    .panel { display: grid; grid-template-columns: 588fr 476fr; height: 97px; border: 1px solid #dcdcdc; background: #fff; padding-top: 5px; }
    .table { border-collapse: collapse; table-layout: fixed; height: 83px; }
    .table th, .table td { height: 21px; padding: 0 4px; white-space: nowrap; line-height: 18px; }
    .table thead th { height: 20px; }
    .table th { background: #f0f0f0; border: 1px solid #a0a0a0; font-weight: 600; text-align: center; }
    .table td { background: #c8c8c8; border: 1px solid #c0c0c0; color: #222; }
    .t1 { width: 261px; margin-left: 8px; }
    .t2 { width: 150px; }
    .h0 { width: 79px; } .h1 { width: 87px; } .h2 { width: 95px; } .h3 { width: 54px; }
    .t2 tr > :first-child { padding: 0 0 0 1px; border-left: 0; text-align: left; }
    .foot { flex: 1; min-height: 22px; margin-top: 6px; border-top: 1px solid #d0d0d0; }

    .mark { position: absolute; left: 1015px; top: 12px; width: 420px; height: 244px; fill: none; stroke: #1b93da; stroke-width: 5; pointer-events: none; }
    .date { position: absolute; font: 500 45px/46px "Noto Sans CJK JP", sans-serif; color: #222; white-space: nowrap; }
    .march { left: 1016px; top: 66px; }
    .may { left: 1237px; top: 61px; }
  `;

  private radio(group: string, text: string, checked = false, disabled = false) {
    return html`<label class="opt ${disabled ? "disabled" : ""}">
      <input class="box radio" type="radio" name=${group} ?checked=${checked} ?disabled=${disabled} />${text}</label>`;
  }

  private check(text: string, checked = false, extra = "") {
    return html`<label class="opt ${extra}"><input class="box tick" type="checkbox" ?checked=${checked} />${text}</label>`;
  }

  private zoom() {
    return html`<div class="zoom">
      <button class="btn">-</button><button class="btn focus">+</button><button class="btn">R</button>
    </div>`;
  }

  render() {
    return html`<div class="window">
      <header class="title">
        <svg class="logo" viewBox="0 0 15 13" aria-hidden="true">
          <path fill="#f4f4f4" stroke="#9aa5ad" d="M.5.5h14v12H.5z" /><path fill="#2f7f86" d="M2 3h5v8H2z" /><path fill="#4aa36b" d="M2 8h5v3H2z" />
          <path fill="#c3d3e6" d="M8 3h2v8H8zM11 3h2v8h-2z" />
        </svg>
        <span>PHD2 Log Viewer - PHD2_GuideLog_2021-03-17_192436.txt - PHD2 2.6.9dev3 [Windows]</span>
      </header>
      <nav class="menu"><button class="item">File</button><button class="item">Help</button></nav>

      <div class="top">
        <fieldset class="group logs">
          <legend class="legend">Log sections</legend>
          <div class="list">
            <div class="rows">
              <table class="sections">
                <colgroup><col class="c1" /><col class="c2" /><col class="c3" /><col class="c4" /></colgroup>
                <tbody>${sections.map((r) => html`<tr class=${r[0] === 12 ? "chosen" : ""}>${r.map((c) => html`<td>${c}</td>`)}</tr>`)}</tbody>
              </table>
            </div>
            <div class="vbar">
              <button class="arrow" aria-label="Scroll up"><svg class="chev" viewBox="0 0 15 16"><path d="M4 11l3.500-4 3.500 4" /></svg></button>
              <span class="vtrack"><span class="vthumb"></span></span>
              <button class="arrow" aria-label="Scroll down"><svg class="chev" viewBox="0 0 15 16"><path d="M4 6l3.500 4L11 6" /></svg></button>
            </div>
          </div>
        </fieldset>
        <fieldset class="group info">
          <legend class="legend">Section heading</legend>
          <div class="infobox">
            <textarea class="log" readonly wrap="off" aria-label="Section heading, March 18" .value=${heading}></textarea>
            <textarea class="log second" readonly wrap="off" aria-label="Section heading, May 10" .value=${headingRight}></textarea>
          </div>
        </fieldset>
      </div>

      <input class="frame" readonly aria-label="Frame"
        .value=${"2021-03-18 03:51:57 Frame 1011 t=4573.61 (x,y)=(-0.04,-0.10) (RA,Dec)=(0.09,-0.07) guide (0.00,0.00) corr (0,0) m=177173 SNR=114.5 SAT"} />

      <div class="plots">
        <guide-plot name="Guiding, March 18" .plot=${marchPlot}></guide-plot>
        <guide-plot name="Guiding, May 10" .plot=${mayPlot}></guide-plot>
      </div>

      <div class="hbar">
        <button class="arrow back" aria-label="Scroll left"><svg class="chev" viewBox="0 0 15 16"><path d="M10 4L6 8l4 4" /></svg></button>
        <span class="thumb"></span><span class="thumb2"></span>
      </div>

      <div class="tools">
        <div class="key"><span class="kra">—RA</span><span class="kdec">—Dec</span></div>
        ${this.zoom()}${this.zoom()}
      </div>

      <div class="bottom">
        <fieldset class="group plotopts">
          <legend class="legend">Plot options</legend>
          <fieldset class="group radios dev"><legend class="legend">Device</legend>
            ${this.radio("device", "Mount", true)}${this.radio("device", "AO", false, true)}</fieldset>
          <fieldset class="group radios units"><legend class="legend">Units</legend>
            ${this.radio("units", "arc-sec", true)}${this.radio("units", "pixels")}</fieldset>
          <fieldset class="group radios axes"><legend class="legend">Axes</legend>
            ${this.radio("axes", "RA/Dec", true)}${this.radio("axes", "dx/dy")}</fieldset>
          <div class="checks">
            ${this.check("Corrections", true)}${this.check("RA", true)}${this.check("Star mass")}${this.check("Events", true)}
            ${this.check("Scatter", false, "scatter")}
            ${this.check("Grid", true)}${this.check("Dec", true)}${this.check("SNR")}${this.check("Limits")}
          </div>
        </fieldset>
        <section class="stats">
          <div class="tabs" role="tablist">
            <button class="tab on" role="tab" aria-selected="true">Statistics</button>
            <button class="tab" role="tab" aria-selected="false">Drift</button>
          </div>
          <div class="panel">
            <table class="table t1">
              <thead><tr><th class="h0"></th><th class="h1">RMS</th><th class="h2">Peak</th></tr></thead>
              <tbody>
                <tr><th>RA</th><td>0.69" (0.22 px)</td><td>-2.13" (-0.66 px)</td></tr>
                <tr><th>Dec</th><td>0.62" (0.19 px)</td><td>-2.23" (-0.69 px)</td></tr>
                <tr><th>Total</th><td>0.93" (0.29 px)</td><td></td></tr>
              </tbody>
            </table>
            <table class="table t2">
              <thead><tr><th class="h3">RMS</th><th class="h2">Peak</th></tr></thead>
              <tbody>
                <tr><td>(0.27 px)</td><td>3.54" ( 1.10 px)</td></tr>
                <tr><td>(0.34 px)</td><td>-5.78" (-1.79 px)</td></tr>
                <tr><td>(0.43 px)</td><td></td></tr>
              </tbody>
            </table>
          </div>
        </section>
      </div>
      <div class="foot"></div>
      <task-bar></task-bar>

      <span class="date march">3月18日</span>
      <span class="date may">5月10日</span>
      <svg class="mark" viewBox="0 0 420 244" aria-hidden="true">
        <path d="M187 4L189 240M3 145L174 144M206 144L417 145" />
        <path d="M174.500 130v28L191 144zM205.500 130v28L187 144z" />
      </svg>
    </div>`;
  }
}
